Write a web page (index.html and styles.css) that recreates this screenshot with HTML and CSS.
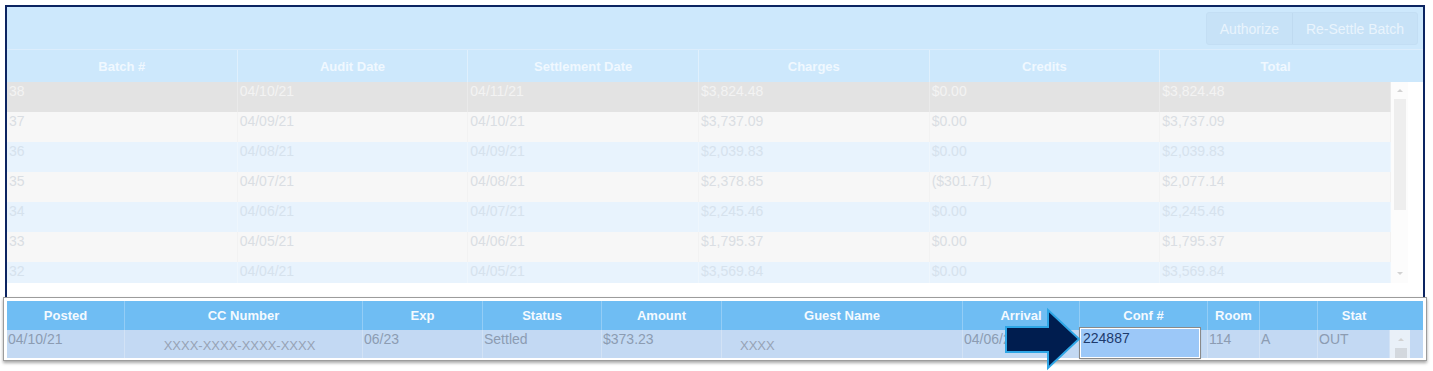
FILE: index.html
```html
<!DOCTYPE html>
<html>
<head>
<meta charset="utf-8">
<link rel="stylesheet" href="styles.css">
</head>
<body>
<div class="frame">
  <div class="toolbar">
    <div class="btn-group">
      <span class="btn">Authorize</span>
      <span class="btn">Re-Settle Batch</span>
    </div>
  </div>
  <div class="thead">
    <div class="th">Batch #</div>
    <div class="th">Audit Date</div>
    <div class="th">Settlement Date</div>
    <div class="th">Charges</div>
    <div class="th">Credits</div>
    <div class="th last">Total</div>
    <div class="th-gutter"></div>
  </div>
  <div class="tbody-wrap">
    <div class="tbody">
      <div class="tr sel"><div>38</div><div>04/10/21</div><div>04/11/21</div><div>$3,824.48</div><div>$0.00</div><div>$3,824.48</div></div>
      <div class="tr odd"><div>37</div><div>04/09/21</div><div>04/10/21</div><div>$3,737.09</div><div>$0.00</div><div>$3,737.09</div></div>
      <div class="tr even"><div>36</div><div>04/08/21</div><div>04/09/21</div><div>$2,039.83</div><div>$0.00</div><div>$2,039.83</div></div>
      <div class="tr odd"><div>35</div><div>04/07/21</div><div>04/08/21</div><div>$2,378.85</div><div>($301.71)</div><div>$2,077.14</div></div>
      <div class="tr even"><div>34</div><div>04/06/21</div><div>04/07/21</div><div>$2,245.46</div><div>$0.00</div><div>$2,245.46</div></div>
      <div class="tr odd"><div>33</div><div>04/05/21</div><div>04/06/21</div><div>$1,795.37</div><div>$0.00</div><div>$1,795.37</div></div>
      <div class="tr even"><div>32</div><div>04/04/21</div><div>04/05/21</div><div>$3,569.84</div><div>$0.00</div><div>$3,569.84</div></div>
    </div>
    <div class="vscroll">
      <span class="arr up"></span>
      <span class="thumb"></span>
      <span class="arr down"></span>
    </div>
  </div>
</div>
<div class="panel">
  <div class="phead">
    <div>Posted</div><div>CC Number</div><div>Exp</div><div>Status</div><div>Amount</div><div>Guest Name</div><div>Arrival</div><div>Conf #</div><div>Room</div><div></div><div class="last">Stat</div><div class="pgutter"></div>
  </div>
  <div class="prow">
    <div>04/10/21</div>
    <div class="cc">XXXX-XXXX-XXXX-XXXX</div>
    <div>06/23</div>
    <div>Settled</div>
    <div>$373.23</div>
    <div class="guest">XXXX</div>
    <div>04/06/21</div>
    <div class="conf"><span class="conf-box">224887</span></div>
    <div>114</div>
    <div>A</div>
    <div>OUT</div>
    <div class="pscroll"><span class="arr up"></span><span class="pthumb"></span></div>
  </div>
  <svg class="pointer" width="80" height="66" viewBox="0 0 80 66">
    <polygon points="2,22 44,22 44,5 75,34 44,63 44,47 2,47" fill="#001d4f" stroke="#2ea6e6" stroke-width="2" stroke-linejoin="miter"/>
  </svg>
</div>
</body>
</html>
```
FILE: styles.css
```css
* { box-sizing: border-box; }
body {
  margin: 0;
  background: #ffffff;
  font-family: "Liberation Sans", Arial, sans-serif;
  width: 1433px;
  height: 371px;
  overflow: hidden;
}
.frame {
  margin: 5px 0 0 5px;
  width: 1420px;
  height: 292px;
  border: 2px solid #0c2461;
  border-bottom: 0;
  background: #ffffff;
}
.toolbar {
  height: 43px;
  background: #cde8fc;
  display: flex;
  justify-content: flex-end;
  align-items: flex-start;
  padding: 5px 5px 0 0;
  border-bottom: 1px solid #dcedfc;
}
.btn-group {
  display: flex;
  height: 33px;
  background: #c7e2f7;
  border: 1px solid #c3def4;
  border-radius: 3px;
}
.btn {
  display: flex;
  align-items: center;
  padding: 0 13px;
  font-size: 14px;
  color: #e9f4fd;
}
.btn + .btn { border-left: 1px solid #bfdaf0; }
.thead {
  display: grid;
  grid-template-columns: repeat(6, 230.67px) 32px;
  height: 32px;
  background: #cde8fc;
}
.th {
  display: flex;
  align-items: center;
  justify-content: center;
  font-size: 13px;
  font-weight: bold;
  color: #f0f8ff;
  border-right: 1px solid #dff0fd;
}
.th.last { border-right: 0; }
.tbody-wrap {
  display: flex;
  height: 201px;
  overflow: hidden;
}
.tbody { width: 1384px; }
.tr {
  display: grid;
  grid-template-columns: repeat(6, 1fr);
  height: 30px;
}
.tr > div {
  padding: 1px 0 0 2px;
  font-size: 14px;
  line-height: 16px;
  color: #dadee3;
  border-right: 1px solid #f2f2f2;
}
.tr.sel { background: #e3e3e3; }
.tr.sel > div { color: #f3f3f3; border-right-color: #eaeaea; }
.tr.odd { background: #f7f7f7; }
.tr.even { background: #e8f3fd; }
.tr.even > div { color: #d6e2ed; border-right-color: #eef6fd; }
.vscroll {
  width: 17px;
  background: #fcfcfc;
  display: flex;
  flex-direction: column;
  align-items: center;
  padding-top: 7px;
}
.arr {
  width: 0;
  height: 0;
  border-left: 3px solid transparent;
  border-right: 3px solid transparent;
}
.arr.up { border-bottom: 3px solid #d2d2d2; }
.arr.down { border-top: 3px solid #d2d2d2; margin-top: 62px; }
.thumb {
  width: 12px;
  height: 111px;
  margin-top: 7px;
  background: #eeeeee;
}
.panel {
  position: relative;
  margin-left: 3px;
  width: 1424px;
  border: 1px solid #9c9c9c;
  box-shadow: 0 2px 3px rgba(0,0,0,0.35);
  background: #ffffff;
  padding: 3px 3px 2px 3px;
}
.phead, .prow {
  display: grid;
  grid-template-columns: 118px 238px 120px 119px 120px 241px 117px 128px 52px 58px 72px 33px;
}
.phead {
  height: 29px;
  background: #6fbdf3;
}
.phead > div {
  display: flex;
  align-items: center;
  justify-content: center;
  font-size: 13px;
  font-weight: bold;
  color: #f4faff;
  border-right: 1px solid #93cdf6;
}
.phead > .last, .phead > .pgutter { border-right: 0; }
.prow {
  height: 28px;
  background: #c3d9f3;
}
.prow > div {
  font-size: 14px;
  line-height: 16px;
  padding: 1px 0 0 1px;
  color: #8c9cb2;
  border-right: 1px solid #d2e2f5;
}
.prow > .cc {
  text-align: center;
  font-size: 13px;
  padding: 8px 8px 0 0;
  color: #97a3b6;
}
.prow > .guest {
  font-size: 13px;
  padding: 8px 0 0 18px;
  color: #97a3b6;
}
.prow > .conf { padding: 0; }
.conf-box {
  display: block;
  width: 120px;
  height: 30px;
  margin-top: -2px;
  background: #9cc8f8;
  border: 1px solid #ffffff;
  box-shadow: 0 0 0 1px #8a8a8a, 0 1px 2px rgba(0,0,0,0.4);
  color: #1d3a6c;
  font-size: 14px;
  line-height: 16px;
  padding: 1px 0 0 2px;
}
.prow > .pscroll {
  border-right: 0;
  display: flex;
  flex-direction: column;
  align-items: center;
  width: 20px;
  background: #e9f0f8;
  padding-top: 8px;
}
.pthumb {
  width: 12px;
  height: 10px;
  margin-top: 7px;
  background: #d3d8de;
}
.pointer {
  position: absolute;
  left: 1000px;
  top: 7px;
}
```
